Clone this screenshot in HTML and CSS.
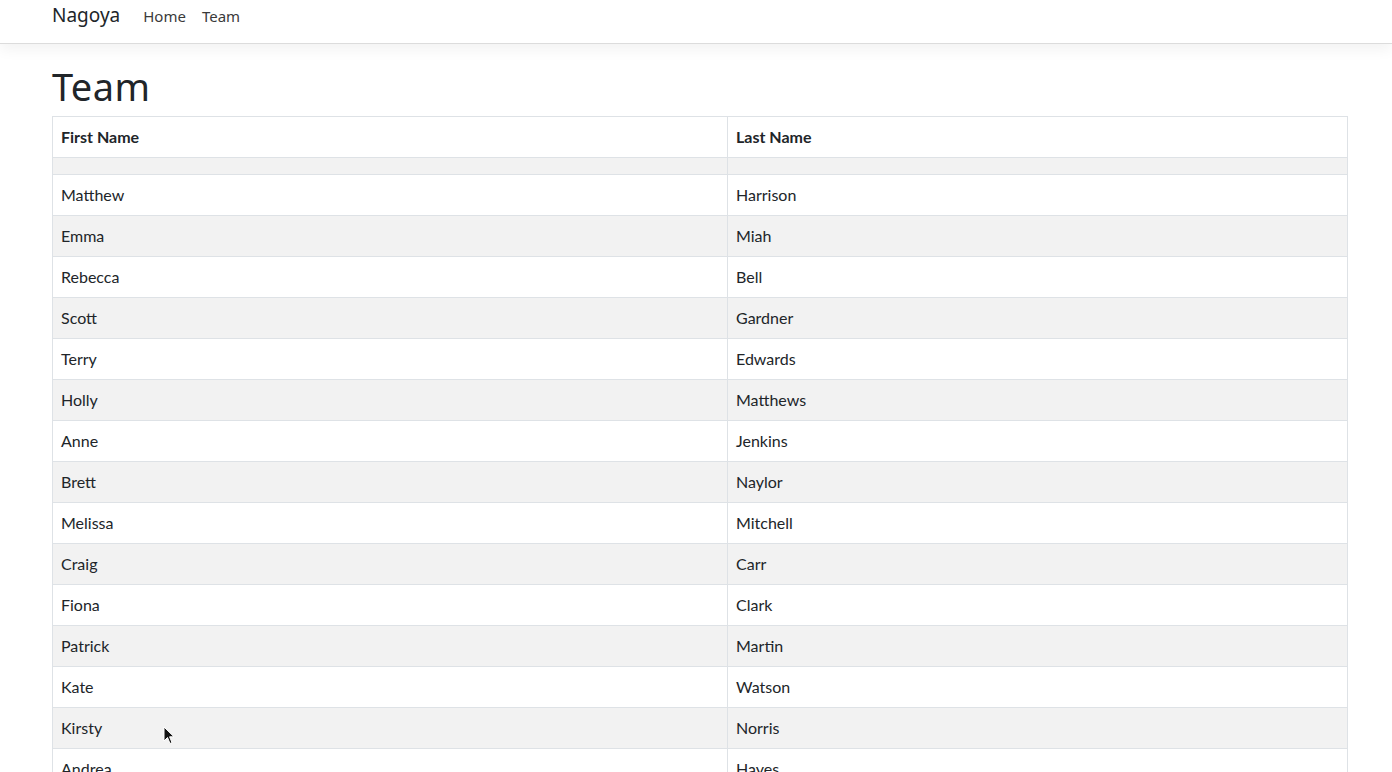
FILE: index.html
```html
<!DOCTYPE html>
<html lang="en">
<head>
  <meta charset="UTF-8">
  <meta name="viewport" content="width=device-width, initial-scale=1.0">
  <title>Team - Nagoya</title>
  <link rel="stylesheet" href="styles.css">
</head>
<body>

<!-- Top navigation -->
<nav class="navbar">
  <div class="container navbar-inner">
    <a class="brand" href="#">Nagoya</a>
    <a class="nav-link" href="#">Home</a>
    <a class="nav-link" href="#">Team</a>
  </div>
</nav>

<div class="container">
  <h1>Team</h1>

  <table class="team-table">
    <thead>
      <tr>
        <th class="col-first">First Name</th>
        <th>Last Name</th>
      </tr>
    </thead>
    <tbody>
      <tr class="empty"><td></td><td></td></tr>
      <tr><td>Matthew</td><td>Harrison</td></tr>
      <tr><td>Emma</td><td>Miah</td></tr>
      <tr><td>Rebecca</td><td>Bell</td></tr>
      <tr><td>Scott</td><td>Gardner</td></tr>
      <tr><td>Terry</td><td>Edwards</td></tr>
      <tr><td>Holly</td><td>Matthews</td></tr>
      <tr><td>Anne</td><td>Jenkins</td></tr>
      <tr><td>Brett</td><td>Naylor</td></tr>
      <tr><td>Melissa</td><td>Mitchell</td></tr>
      <tr><td>Craig</td><td>Carr</td></tr>
      <tr><td>Fiona</td><td>Clark</td></tr>
      <tr><td>Patrick</td><td>Martin</td></tr>
      <tr><td>Kate</td><td>Watson</td></tr>
      <tr><td>Kirsty</td><td>Norris</td></tr>
      <tr><td>Andrea</td><td>Hayes</td></tr>
    </tbody>
  </table>
</div>

<!-- mouse pointer -->
<svg class="pointer" width="12" height="20" viewBox="0 0 12 20">
  <path d="M1 1 L1 15 L4.5 11.5 L7 17.5 L9 16.6 L6.6 10.8 L11 10.8 Z" fill="#111" stroke="#fff" stroke-width="1"/>
</svg>

</body>
</html>
```

FILE: styles.css
```css
body {
  margin: 0;
  background-color: #fff;
  color: #212529;
  font-family: Lato, "Noto Sans", sans-serif;
  font-size: 16px;
  line-height: 24px;
}
a {
  text-decoration: none;
}
.container {
  width: 1296px;
  margin-left: 52px;
}
.navbar {
  height: 43px;
  border-bottom: 1px solid #dcdcdc;
  box-shadow: 0 6px 14px rgba(0, 0, 0, 0.05);
}
.navbar-inner {
  display: flex;
  align-items: baseline;
  padding-top: 3px;
}
.brand {
  font-family: "Noto Sans", sans-serif;
  font-size: 19px;
  color: #212529;
  margin-right: 23px;
}
.nav-link {
  font-family: "Noto Sans", sans-serif;
  font-size: 15px;
  color: #3a3a3a;
  margin-right: 16px;
}
h1 {
  font-family: "Noto Sans", sans-serif;
  font-weight: 400;
  font-size: 38px;
  line-height: 48px;
  margin: 18px 0 6px;
  letter-spacing: 0.4px;
}
.team-table {
  width: 100%;
  border-collapse: collapse;
  border: 1px solid #dee2e6;
}
.team-table th,
.team-table td {
  border: 1px solid #dee2e6;
  padding: 8px 8px;
  text-align: left;
  height: 24px;
}
.team-table th {
  font-weight: 700;
}
.col-first {
  width: 658px;
}
.team-table tr.empty td {
  height: 0;
  padding: 8px 8px;
}
.team-table tbody tr:nth-child(odd) {
  background-color: #f2f2f2;
}
.pointer {
  position: absolute;
  left: 163px;
  top: 726px;
}
```
